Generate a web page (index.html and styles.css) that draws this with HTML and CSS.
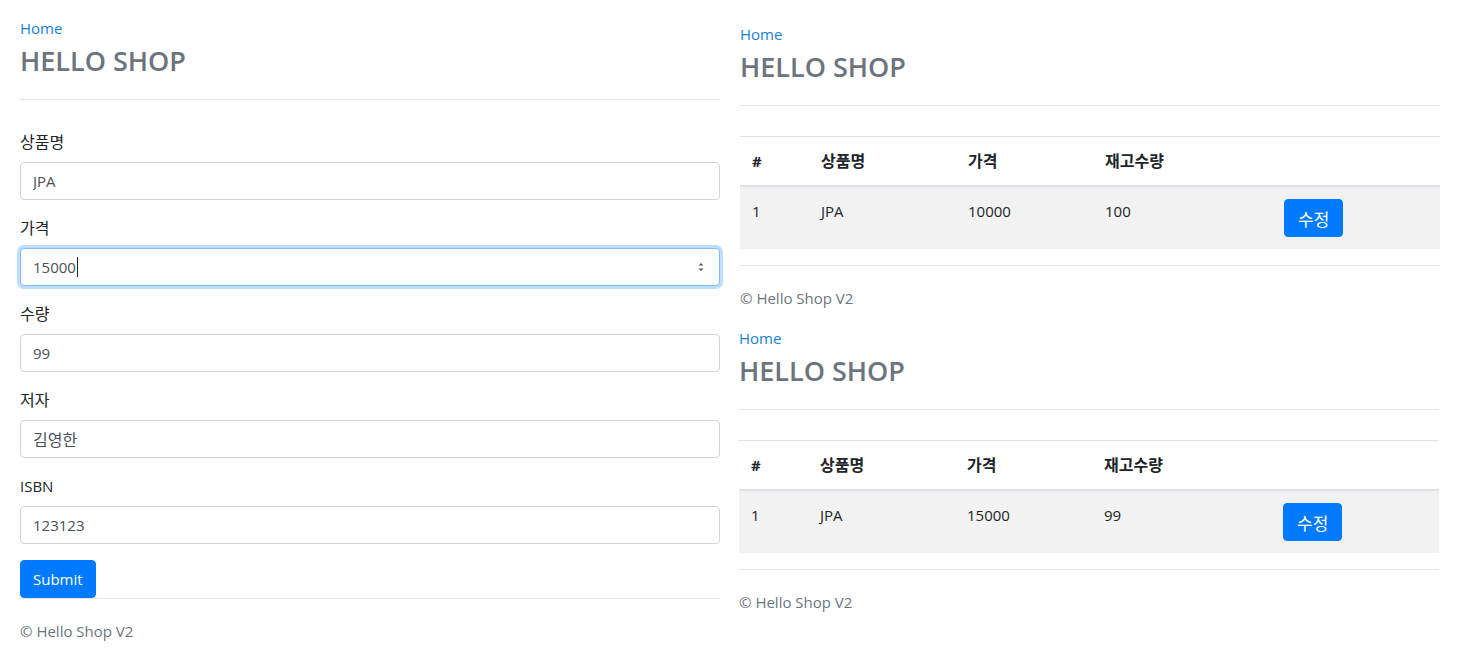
FILE: index.html
```html
<!DOCTYPE html>
<html lang="ko">
<head>
<meta charset="utf-8">
<title>HELLO SHOP</title>
<link rel="stylesheet" href="styles.css">
</head>
<body>
<div class="board">
  <section class="panel panel-form">
    <div class="header">
      <a class="home" href="#">Home</a>
      <h3 class="brand">HELLO SHOP</h3>
    </div>
    <form class="form">
      <div class="group">
        <label class="label ko">상품명</label>
        <input class="control" type="text" value="JPA">
      </div>
      <div class="group">
        <label class="label ko">가격</label>
        <div class="control control-focus">
          <span class="value">15000</span><span class="caret"></span>
          <svg class="spin" width="8" height="12" viewBox="0 0 8 12"><path d="M1.5 4.5 L4 2 L6.5 4.5 Z M1.5 7.5 L4 10 L6.5 7.5 Z" fill="#555"/></svg>
        </div>
      </div>
      <div class="group">
        <label class="label ko">수량</label>
        <input class="control" type="text" value="99">
      </div>
      <div class="group">
        <label class="label ko">저자</label>
        <input class="control ko" type="text" value="김영한">
      </div>
      <div class="group">
        <label class="label">ISBN</label>
        <input class="control" type="text" value="123123">
      </div>
      <button class="btn btn-submit" type="button">Submit</button>
    </form>
    <div class="footer">© Hello Shop V2</div>
  </section>

  <div class="stack">
    <section class="panel">
      <div class="header">
        <a class="home" href="#">Home</a>
        <h3 class="brand">HELLO SHOP</h3>
      </div>
      <table class="table">
        <colgroup><col class="c1"><col class="c2"><col class="c3"><col class="c4"><col></colgroup>
        <thead><tr><th>#</th><th class="ko">상품명</th><th class="ko">가격</th><th class="ko">재고수량</th><th></th></tr></thead>
        <tbody><tr><td>1</td><td>JPA</td><td>10000</td><td>100</td><td><button class="btn ko" type="button">수정</button></td></tr></tbody>
      </table>
      <div class="footer">© Hello Shop V2</div>
    </section>

    <section class="panel panel-shift">
      <div class="header">
        <a class="home" href="#">Home</a>
        <h3 class="brand">HELLO SHOP</h3>
      </div>
      <table class="table">
        <colgroup><col class="c1"><col class="c2"><col class="c3"><col class="c4"><col></colgroup>
        <thead><tr><th>#</th><th class="ko">상품명</th><th class="ko">가격</th><th class="ko">재고수량</th><th></th></tr></thead>
        <tbody><tr><td>1</td><td>JPA</td><td>15000</td><td>99</td><td><button class="btn ko" type="button">수정</button></td></tr></tbody>
      </table>
      <div class="footer">© Hello Shop V2</div>
    </section>
  </div>
</div>
</body>
</html>
```

FILE: styles.css
```css
* { box-sizing: border-box; }
html, body { margin: 0; padding: 0; background: #fff; }
body {
  font-family: "Open Sans", "Noto Sans CJK KR", sans-serif;
  font-size: 15px;
  line-height: 24px;
  color: #212529;
  overflow: hidden;
}
.ko { font-size: 16px; }
.board {
  display: flex;
  gap: 20px;
  padding-left: 20px;
}
.panel { width: 700px; }
.panel-form { padding-top: 16px; }
.stack { width: 700px; padding-top: 22px; display: flex; flex-direction: column; gap: 16px; }
.panel-shift { margin-left: -1px; }

.header {
  border-bottom: 1px solid #e5e5e5;
  padding-bottom: 21px;
  margin-bottom: 30px;
}
.home {
  display: block;
  color: #1a7fd4;
  text-decoration: none;
  height: 24px;
}
.brand {
  margin: 4px 0 0;
  font-size: 27px;
  line-height: 34px;
  font-weight: 600;
  color: #6c757d;
}

.group { margin-bottom: 16px; }
.label { display: block; margin-bottom: 8px; height: 24px; }
.control {
  display: flex;
  align-items: center;
  width: 100%;
  height: 38px;
  padding: 6px 12px;
  font-family: inherit;
  font-size: 15px;
  color: #495057;
  background: #fff;
  border: 1px solid #ced4da;
  border-radius: 4px;
  outline: none;
}
.control.ko { font-size: 16px; }
.control-focus {
  border-color: #80bdff;
  box-shadow: 0 0 0 3px rgba(0, 123, 255, .25);
}
.caret { width: 1px; height: 20px; background: #222; margin-left: 1px; }
.spin { margin-left: auto; margin-right: 2px; }

.btn {
  display: inline-block;
  height: 38px;
  padding: 0 12px;
  font-family: inherit;
  font-size: 15px;
  color: #fff;
  background: #007bff;
  border: 1px solid #007bff;
  border-radius: 4px;
}
.btn.ko { font-size: 17px; padding: 0 13px; }
.btn-submit { display: block; }

.footer {
  border-top: 1px solid #e5e5e5;
  padding-top: 20px;
  color: #6c757d;
}

.table {
  width: 100%;
  border-collapse: collapse;
  margin-bottom: 16px;
}
.c1 { width: 69px; }
.c2 { width: 147px; }
.c3 { width: 137px; }
.c4 { width: 179px; }
.table th, .table td {
  padding: 12px;
  text-align: left;
  vertical-align: top;
  border-top: 1px solid #dee2e6;
  line-height: 24px;
}
.table th { font-weight: 700; }
.table thead th { border-bottom: 2px solid #dee2e6; }
.table tbody tr { background: #f2f2f2; }
.table tbody td { border-top: none; }
```
